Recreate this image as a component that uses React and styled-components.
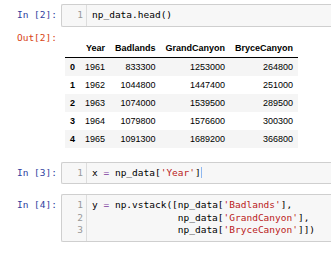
import React from "react";
import styled, { createGlobalStyle } from "styled-components";

const Global = createGlobalStyle`
    html, body {
        margin: 0;
        padding: 0;
        background: #fff;
        overflow: hidden;
    }
`;

const Notebook = styled.div`
    width: 331px;
`;

const Cell = styled.div`
    display: flex;
    flex-direction: column;
    padding: 4px 0 6px;
`;

const Row = styled.div`
    display: flex;
    align-items: flex-start;
`;

const Prompt = styled.div`
    width: 57px;
    margin-right: 4px;
    flex-shrink: 0;
    text-align: right;
    font-family: "DejaVu Sans Mono", monospace;
    font-size: 9.5px;
    line-height: 12.5px;
    padding-top: ${p => (p.out ? 0 : 5)}px;
    color: ${p => (p.out ? "#D84315" : "#303F9F")};
`;

const Editor = styled.div`
    flex: 1;
    min-width: 0;
    display: flex;
    border: 1px solid #cfcfcf;
    border-right: none;
    border-radius: 2px 0 0 2px;
    background: #f7f7f7;
    font-family: "DejaVu Sans Mono", monospace;
    font-size: 9.5px;
    line-height: 12.5px;
`;

const Gutter = styled.div`
    width: 21px;
    padding: 4px 3px 4px 0;
    border-right: 1px solid #ddd;
    text-align: right;
    color: #999;
`;

const Code = styled.div`
    padding: 4px 0 4px 5px;
    color: #000;
    white-space: pre;
`;

const Op = styled.span`
    color: #7c3a9e;
`;

const Str = styled.span`
    color: #BA2121;
`;

const Cursor = styled.span`
    display: inline-block;
    width: 0;
    height: 11px;
    vertical-align: -2px;
    border-left: 1px solid #8fb8f0;
`;

const Output = styled.div`
    display: flex;
    align-items: flex-start;
    margin-top: 5px;
    padding-bottom: 4px;
`;

const Table = styled.table`
    margin: 8px 0 0 4px;
    border-collapse: collapse;
    border-spacing: 0;
    font-family: "Liberation Sans", Arial, sans-serif;
    font-size: 9px;
    color: #000;
`;

const Th = styled.th`
    height: 17px;
    padding: 0 5px;
    text-align: right;
    font-weight: bold;
    border-bottom: 1px solid #000;
    vertical-align: middle;
`;

const Tr = styled.tr`
    background: ${p => (p.odd ? "#fff" : "#f5f5f5")};
`;

const Td = styled.td`
    height: 18px;
    padding: 0 5px;
    text-align: right;
    vertical-align: middle;
    font-weight: ${p => (p.index ? "bold" : "normal")};
`;

const columns = ["Year", "Badlands", "GrandCanyon", "BryceCanyon"];

const rows = [
    [1961, 833300, 1253000, 264800],
    [1962, 1044800, 1447400, 251000],
    [1963, 1074000, 1539500, 289500],
    [1964, 1079800, 1576600, 300300],
    [1965, 1091300, 1689200, 366800],
];

function InputCell({ n, lines, children }) {
    return (
        <Row>
            <Prompt>In [{n}]:</Prompt>
            <Editor>
                <Gutter>
                    {lines.map(l => (
                        <div key={l}>{l}</div>
                    ))}
                </Gutter>
                <Code>{children}</Code>
            </Editor>
        </Row>
    );
}

export default function App() {
    return (
        <Notebook>
            <Global />
            <Cell>
                <InputCell n={2} lines={[1]}>
                    np_data.head()
                </InputCell>
                <Output>
                    <Prompt out>Out[2]:</Prompt>
                    <Table>
                        <thead>
                            <tr>
                                <Th></Th>
                                {columns.map(c => (
                                    <Th key={c}>{c}</Th>
                                ))}
                            </tr>
                        </thead>
                        <tbody>
                            {rows.map((r, i) => (
                                <Tr key={i} odd={i % 2 === 1}>
                                    <Td index>{i}</Td>
                                    {r.map((v, j) => (
                                        <Td key={j}>{v}</Td>
                                    ))}
                                </Tr>
                            ))}
                        </tbody>
                    </Table>
                </Output>
            </Cell>
            <Cell>
                <InputCell n={3} lines={[1]}>
                    x <Op>=</Op> np_data[<Str>'Year'</Str>]
                    <Cursor />
                </InputCell>
            </Cell>
            <Cell>
                <InputCell n={4} lines={[1, 2, 3]}>
                    <div>
                        y <Op>=</Op> np.vstack([np_data[<Str>'Badlands'</Str>],
                    </div>
                    <div>
                        {"               "}np_data[<Str>'GrandCanyon'</Str>],
                    </div>
                    <div>
                        {"               "}np_data[<Str>'BryceCanyon'</Str>]])
                    </div>
                </InputCell>
            </Cell>
        </Notebook>
    );
}
